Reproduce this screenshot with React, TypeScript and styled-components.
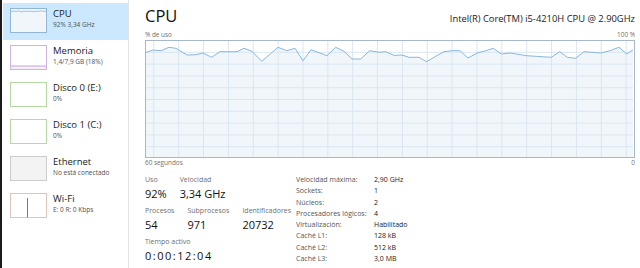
import React from "react";
import styled, { createGlobalStyle } from "styled-components";

const Global = createGlobalStyle`
  html, body { margin: 0; padding: 0; background: #fff; }
  body { font-family: "Open Sans", "Noto Sans", Arial, sans-serif; }
  #root { width: 640px; height: 268px; overflow: hidden; }
`;

const Window = styled.div`
  display: flex;
  width: 640px;
  height: 268px;
  box-sizing: border-box;
  background: #fff;
  border-left: 2px solid #1b1b1b;
`;

const Sidebar = styled.nav`
  width: 127px;
  flex: none;
  box-sizing: border-box;
  border-right: 1px solid #e2e2e2;
  padding: 3px 0 0 1px;
  display: flex;
  flex-direction: column;
`;

const Item = styled.div<{ $active?: boolean }>`
  display: flex;
  gap: 6px;
  width: 125px;
  height: 37px;
  box-sizing: border-box;
  padding: 5px 0 0 7px;
  background: ${(p) => (p.$active ? "#cce8ff" : "transparent")};
`;

const ItemText = styled.div`
  display: flex;
  flex-direction: column;
`;

const ItemTitle = styled.div`
  font-size: 9.5px;
  line-height: 12px;
  color: #1a1a1a;
  white-space: nowrap;
`;

const ItemSub = styled.div`
  font-size: 6.5px;
  line-height: 10px;
  color: #505050;
  white-space: nowrap;
`;

const Main = styled.main`
  flex: 1;
  display: flex;
  flex-direction: column;
  padding: 4px 5px 0 16px;
  min-width: 0;
`;

const TitleRow = styled.div`
  display: flex;
  justify-content: space-between;
  align-items: baseline;
  height: 24px;
`;

const Title = styled.h1`
  margin: 0;
  font-size: 16.5px;
  font-weight: 400;
  line-height: 24px;
  color: #111;
`;

const Model = styled.div`
  font-size: 9.4px;
  color: #1a1a1a;
  white-space: nowrap;
`;

const AxisRow = styled.div<{ $top?: number }>`
  display: flex;
  justify-content: space-between;
  margin-top: ${(p) => p.$top ?? 0}px;
  font-size: 6.4px;
  line-height: 10px;
  color: #707070;
`;

const ChartFrame = styled.div`
  height: 118px;
  box-sizing: border-box;
  border: 1px solid #a7b8ca;
  background: #fff;
  svg { display: block; }
`;

const Stats = styled.section`
  display: flex;
  margin-top: 7px;
`;

const LeftBlock = styled.div`
  width: 151px;
  display: flex;
  flex-direction: column;
  gap: 3px;
`;

const Group = styled.div`
  display: flex;
  gap: 13px;
`;

const Stat = styled.div`
  display: flex;
  flex-direction: column;
`;

const StatLabel = styled.div`
  font-size: 7px;
  line-height: 10px;
  color: #6f6f6f;
  white-space: nowrap;
`;

const StatValue = styled.div<{ $spacing?: number }>`
  font-size: 11px;
  line-height: 18px;
  color: #111;
  letter-spacing: ${(p) => p.$spacing ?? 0}px;
  white-space: nowrap;
`;

const Table = styled.div`
  display: grid;
  grid-template-columns: 78px auto;
  font-size: 7px;
  line-height: 9.9px;
  white-space: nowrap;
`;

const TLabel = styled.div`
  color: #555;
`;

const TValue = styled.div`
  color: #222;
`;

type ThumbKind = "cpu" | "mem" | "disk" | "eth" | "wifi";

const Thumb: React.FC<{ kind: ThumbKind }> = ({ kind }) => {
  const cfg: Record<ThumbKind, { border: string; bg: string }> = {
    cpu: { border: "#93b6d8", bg: "#f1f6fb" },
    mem: { border: "#cdb3dd", bg: "#ffffff" },
    disk: { border: "#b5d9a0", bg: "#ffffff" },
    eth: { border: "#cccccc", bg: "#f3f3f3" },
    wifi: { border: "#e0c6b9", bg: "#ffffff" },
  };
  const c = cfg[kind];
  return (
    <svg width="37" height="25" viewBox="0 0 37 25" style={{ flex: "none" }}>
      <rect x="0.5" y="0.5" width="36" height="24" fill={c.bg} stroke={c.border} />
      {kind === "cpu" && (
        <polyline
          points="1,3.4 4,3 6,3.6 8,2.8 10,3.3 12,3.9 14,3.1 16,3.5 18,2.9 20,3.6 22,3.2 24,3.8 26,3 28,3.4 30,3.2 32,2.8 34,3.6 36,2.9"
          fill="none"
          stroke="#7aaad8"
          strokeWidth="0.7"
        />
      )}
      {kind === "mem" && (
        <>
          <rect x="1" y="21" width="35" height="3" fill="#f5effa" />
          <line x1="1" y1="21" x2="36" y2="21" stroke="#b593ca" strokeWidth="0.8" />
        </>
      )}
      {kind === "wifi" && (
        <line x1="17.5" y1="5" x2="17.5" y2="24.5" stroke="#c06a1e" strokeWidth="1" />
      )}
    </svg>
  );
};

const items: { kind: ThumbKind; title: string; sub: string; active?: boolean }[] = [
  { kind: "cpu", title: "CPU", sub: "92% 3,34 GHz", active: true },
  { kind: "mem", title: "Memoria", sub: "1,4/7,9 GB (18%)" },
  { kind: "disk", title: "Disco 0 (E:)", sub: "0%" },
  { kind: "disk", title: "Disco 1 (C:)", sub: "0%" },
  { kind: "eth", title: "Ethernet", sub: "No está conectado" },
  { kind: "wifi", title: "Wi-Fi", sub: "E: 0 R: 0 Kbps" },
];

const raw: [number, number][] = [
  [146, 53.3], [154, 51], [162, 51.7], [170, 48.3], [177, 49.3], [188, 56], [197, 55.7],
  [204, 54], [212.7, 58.3], [221, 52.7], [238, 52.7], [245, 49.3], [253, 52.3],
  [262.7, 62.3], [279, 48.3], [287.7, 51.7], [296, 49.3], [304, 61.7], [312, 50.7],
  [328, 56.7], [336.7, 48.3], [345, 52.3], [353, 60], [361.7, 60], [370.7, 51.7],
  [380, 53.3], [386.7, 52.7], [395, 56.4], [403, 56], [410, 58.3], [420, 58.3],
  [427.7, 62.7], [436.7, 57.3], [445, 52.7], [453.3, 51.7], [461, 51.7], [469, 59],
  [478.3, 54], [486.7, 51.7], [494.3, 49.3], [502.3, 55], [511, 54], [527.7, 56.7],
  [552.3, 58.3], [560.7, 52.7], [568.3, 58.3], [576.7, 59.3], [585, 52.7], [601.7, 54],
  [611, 51.7], [620, 48.3], [627.7, 55], [635, 50.7],
];

const W = 487;
const H = 116;
const pts = raw.map(([x, y]) => [Math.min(W, Math.max(0, x - 147)), y - 42]);
const linePts = pts.map((p) => p.join(",")).join(" ");
const areaPts = `0,${H} ${linePts} ${W},${H}`;

const Chart: React.FC = () => {
  const vlines = Array.from({ length: 20 }, (_, k) => 7.3 + 24.86 * k);
  const hlines = Array.from({ length: 9 }, (_, k) => 11.8 * (k + 1) - 1);
  return (
    <svg width={W} height={H} viewBox={`0 0 ${W} ${H}`}>
      <polygon points={areaPts} fill="#f1f6fb" />
      {vlines.map((x) => (
        <line key={`v${x}`} x1={x + 0.5} y1="0" x2={x + 0.5} y2={H} stroke="#d9e6f2" strokeWidth="1" />
      ))}
      {hlines.map((y) => (
        <line key={`h${y}`} x1="0" y1={y + 0.5} x2={W} y2={y + 0.5} stroke="#d9e6f2" strokeWidth="1" />
      ))}
      <polyline points={linePts} fill="none" stroke="#8ab7de" strokeWidth="1" />
    </svg>
  );
};

const specs: [string, string][] = [
  ["Velocidad máxima:", "2,90 GHz"],
  ["Sockets:", "1"],
  ["Núcleos:", "2"],
  ["Procesadores lógicos:", "4"],
  ["Virtualización:", "Habilitado"],
  ["Caché L1:", "128 kB"],
  ["Caché L2:", "512 kB"],
  ["Caché L3:", "3,0 MB"],
];

export default function App() {
  return (
    <>
      <Global />
      <Window>
        <Sidebar>
          {items.map((it) => (
            <Item key={it.title} $active={it.active}>
              <Thumb kind={it.kind} />
              <ItemText>
                <ItemTitle>{it.title}</ItemTitle>
                <ItemSub>{it.sub}</ItemSub>
              </ItemText>
            </Item>
          ))}
        </Sidebar>
        <Main>
          <TitleRow>
            <Title>CPU</Title>
            <Model>Intel(R) Core(TM) i5-4210H CPU @ 2.90GHz</Model>
          </TitleRow>
          <AxisRow $top={2}>
            <span>% de uso</span>
            <span>100 %</span>
          </AxisRow>
          <ChartFrame>
            <Chart />
          </ChartFrame>
          <AxisRow>
            <span>60 segundos</span>
            <span>0</span>
          </AxisRow>
          <Stats>
            <LeftBlock>
              <Group>
                <Stat>
                  <StatLabel>Uso</StatLabel>
                  <StatValue>92%</StatValue>
                </Stat>
                <Stat>
                  <StatLabel>Velocidad</StatLabel>
                  <StatValue>3,34 GHz</StatValue>
                </Stat>
              </Group>
              <Group>
                <Stat>
                  <StatLabel>Procesos</StatLabel>
                  <StatValue>54</StatValue>
                </Stat>
                <Stat>
                  <StatLabel>Subprocesos</StatLabel>
                  <StatValue>971</StatValue>
                </Stat>
                <Stat>
                  <StatLabel>Identificadores</StatLabel>
                  <StatValue>20732</StatValue>
                </Stat>
              </Group>
              <Group>
                <Stat>
                  <StatLabel>Tiempo activo</StatLabel>
                  <StatValue $spacing={1.5}>0:00:12:04</StatValue>
                </Stat>
              </Group>
            </LeftBlock>
            <Table>
              {specs.map(([l, v]) => (
                <React.Fragment key={l}>
                  <TLabel>{l}</TLabel>
                  <TValue>{v}</TValue>
                </React.Fragment>
              ))}
            </Table>
          </Stats>
        </Main>
      </Window>
    </>
  );
}
